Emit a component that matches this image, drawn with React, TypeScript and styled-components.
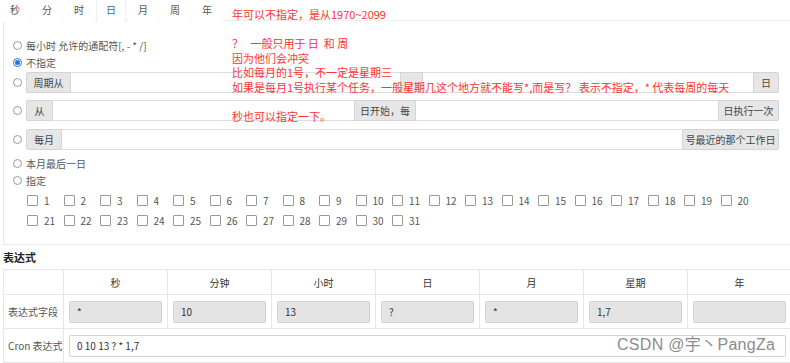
import React from 'react';
import styled, { createGlobalStyle } from 'styled-components';

const GlobalStyle = createGlobalStyle`
  body {
    margin: 0;
    background: #fff;
    font-family: "Noto Sans CJK SC", "Noto Sans", sans-serif;
    color: #555;
  }
`;

const Page = styled.div`
  position: relative;
  width: 790px;
  height: 363px;
  overflow: hidden;
`;

const TabBar = styled.div`
  display: flex;
  height: 21px;
  border-bottom: 1px solid #eee;
  box-sizing: border-box;
`;
const Tab = styled.div<{ $active?: boolean }>`
  width: 30px;
  margin-right: 2px;
  height: 22px;
  padding-bottom: 3px;
  display: flex;
  align-items: center;
  justify-content: center;
  font-size: 10px;
  color: ${p => (p.$active ? '#4a6a9a' : '#555')};
  background: #fff;
  box-sizing: border-box;
  border-left: 1px solid ${p => (p.$active ? '#eee' : 'transparent')};
  border-right: 1px solid ${p => (p.$active ? '#eee' : 'transparent')};
`;

const Panel = styled.div`
  margin-left: 3px;
  border-left: 1px solid #e8e8e8;
  border-bottom: 1px solid #e8e8e8;
  padding: 16px 10px 14px 9px;
`;

const RadioRow = styled.div<{ $top?: number }>`
  display: flex;
  align-items: center;
  height: 17px;
  margin-top: ${p => p.$top || 0}px;
  font-size: 10px;
  color: #555;
`;
const Radio = styled.span<{ $checked?: boolean }>`
  width: 9px;
  height: 9px;
  border-radius: 50%;
  border: 1px solid ${p => (p.$checked ? '#1e78e6' : '#999')};
  box-sizing: border-box;
  margin-right: 4px;
  flex: none;
  display: flex;
  align-items: center;
  justify-content: center;
  &::after {
    content: '';
    display: ${p => (p.$checked ? 'block' : 'none')};
    width: 5px;
    height: 5px;
    border-radius: 50%;
    background: #1e78e6;
  }
`;

const GroupRow = styled.div<{ $top: number }>`
  display: flex;
  align-items: center;
  margin-top: ${p => p.$top}px;
  height: 21px;
`;
const Group = styled.div`
  display: flex;
  flex: 1;
  height: 21px;
  margin-right: 1px;
`;
const Addon = styled.div<{ $w: number }>`
  width: ${p => p.$w}px;
  flex: none;
  box-sizing: border-box;
  background: #e6e6e6;
  border: 1px solid #d4d4d4;
  display: flex;
  align-items: center;
  justify-content: center;
  font-size: 10px;
  color: #444;
  white-space: nowrap;
  &:first-child {
    border-radius: 2px 0 0 2px;
  }
  &:last-child {
    border-radius: 0 2px 2px 0;
  }
`;
const Field = styled.div<{ $w?: number }>`
  ${p => (p.$w ? `width: ${p.$w}px; flex: none;` : 'flex: 1;')}
  box-sizing: border-box;
  border-top: 1px solid #ddd;
  border-bottom: 1px solid #ddd;
  background: #fff;
`;

const CheckGrid = styled.div`
  display: grid;
  grid-template-columns: repeat(20, 36.5px);
  grid-auto-rows: 20px;
  padding-left: 14px;
  margin-top: 1px;
`;
const CheckItem = styled.div`
  display: flex;
  align-items: center;
  font-size: 10px;
  color: #555;
`;
const Box = styled.span`
  width: 11px;
  height: 11px;
  border: 1px solid #999;
  border-radius: 1px;
  box-sizing: border-box;
  margin-right: 6px;
  flex: none;
`;

const SectionTitle = styled.div`
  font-size: 11px;
  font-weight: bold;
  color: #222;
  height: 23px;
  line-height: 23px;
  padding-left: 3px;
  margin-top: 1px;
`;

const Table = styled.div`
  display: grid;
  grid-template-columns: 60px repeat(7, 104px);
  grid-template-rows: 25px 34px 34px;
  margin-left: 3px;
  border-top: 1px solid #e6e6e6;
  border-left: 1px solid #e6e6e6;
`;
const Cell = styled.div<{ $span?: number; $head?: boolean; $label?: boolean }>`
  ${p => (p.$span ? `grid-column: span ${p.$span};` : '')}
  border-right: 1px solid #e6e6e6;
  border-bottom: 1px solid #e6e6e6;
  box-sizing: border-box;
  display: flex;
  align-items: center;
  justify-content: ${p => (p.$head ? 'center' : 'flex-start')};
  padding: ${p => (p.$label ? '0 0 0 4px' : p.$head ? '0' : '0 5px')};
  font-size: 10px;
  color: ${p => (p.$label ? '#555' : '#333')};
  white-space: nowrap;
`;
const ValueBox = styled.div<{ $light?: boolean }>`
  flex: 1;
  height: 22px;
  box-sizing: border-box;
  background: ${p => (p.$light ? '#fff' : '#e4e4e4')};
  border: 1px solid #d2d2d2;
  border-radius: 2px;
  display: flex;
  align-items: center;
  padding-left: 7px;
  font-size: 10px;
  color: #333;
`;

const Note = styled.div`
  position: absolute;
  left: 232px;
  top: 7px;
  font-size: 11px;
  line-height: 14.6px;
  color: #ff3333;
  white-space: pre;
`;
const Watermark = styled.div`
  position: absolute;
  left: 617px;
  top: 335px;
  font-family: "Liberation Sans", "Noto Sans CJK SC", sans-serif;
  font-size: 16px;
  line-height: 20px;
  color: #8c8c8c;
  letter-spacing: 0.3px;
`;

const tabs = ['秒', '分', '时', '日', '月', '周', '年'];
const days = Array.from({ length: 31 }, (_, i) => i + 1);
const heads = ['秒', '分钟', '小时', '日', '月', '星期', '年'];
const values = ['*', '10', '13', '?', '*', '1,7', ''];

const notes = [
  '年可以不指定，是从1970~2099',
  '',
  '？   一般只用于 日  和 周',
  '因为他们会冲突',
  '比如每月的1号，不一定是星期三',
  '如果是每月1号执行某个任务，一般星期几这个地方就不能写*,而是写？ 表示不指定，* 代表每周的每天',
  '',
  '秒也可以指定一下。',
];

const App = () => {
  return (
    <>
      <GlobalStyle />
      <Page>
        <TabBar>
          {tabs.map(t => (
            <Tab key={t} $active={t === '日'}>{t}</Tab>
          ))}
        </TabBar>
        <Panel>
          <RadioRow>
            <Radio />每小时 允许的通配符[, - * /]
          </RadioRow>
          <RadioRow>
            <Radio $checked />不指定
          </RadioRow>
          <GroupRow $top={1}>
            <Radio />
            <Group>
              <Addon $w={45}>周期从</Addon>
              <Field />
              <Addon $w={23}>-</Addon>
              <Field $w={330} />
              <Addon $w={26}>日</Addon>
            </Group>
          </GroupRow>
          <GroupRow $top={7}>
            <Radio />
            <Group>
              <Addon $w={27}>从</Addon>
              <Field />
              <Addon $w={62}>日开始，每</Addon>
              <Field $w={302} />
              <Addon $w={61}>日执行一次</Addon>
            </Group>
          </GroupRow>
          <GroupRow $top={8}>
            <Radio />
            <Group>
              <Addon $w={36}>每月</Addon>
              <Field />
              <Addon $w={97}>号最近的那个工作日</Addon>
            </Group>
          </GroupRow>
          <RadioRow $top={5}>
            <Radio />本月最后一日
          </RadioRow>
          <RadioRow>
            <Radio />指定
          </RadioRow>
          <CheckGrid>
            {days.map(d => (
              <CheckItem key={d}>
                <Box />{d}
              </CheckItem>
            ))}
          </CheckGrid>
        </Panel>
        <SectionTitle>表达式</SectionTitle>
        <Table>
          <Cell $head />
          {heads.map(h => (
            <Cell $head key={h}>{h}</Cell>
          ))}
          <Cell $label>表达式字段</Cell>
          {values.map((v, i) => (
            <Cell key={i}>
              <ValueBox>{v}</ValueBox>
            </Cell>
          ))}
          <Cell $label>Cron 表达式</Cell>
          <Cell $span={7}>
            <ValueBox $light>0 10 13 ? * 1,7</ValueBox>
          </Cell>
        </Table>
        <Note>{notes.join('\n')}</Note>
        <Watermark>CSDN @宇丶PangZa</Watermark>
      </Page>
    </>
  );
};

export default App;
